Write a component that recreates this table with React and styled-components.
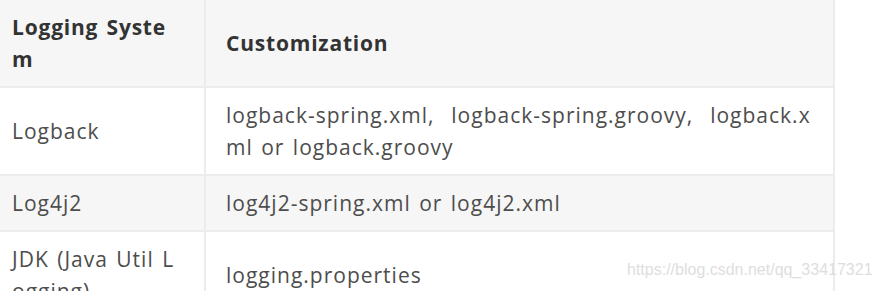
import styled, { createGlobalStyle } from "styled-components"

const GlobalStyle = createGlobalStyle`
    body {
        margin: 0;
        background: #fff;
        overflow: hidden;
    }
`

const Page = styled.div`
    position: relative;
    width: 878px;
    height: 291px;
    overflow: hidden;
`

const Table = styled.table`
    margin-left: -8px;
    width: 843px;
    table-layout: fixed;
    border-collapse: collapse;
    font-family: "Open Sans", "Noto Sans", sans-serif;
    font-size: 21px;
    line-height: 32px;
    letter-spacing: 1px;
    word-spacing: 2px;
    color: #4d4d4d;
    border-right: 2px solid #ededed;
`

const Row = styled.tr`
    background: ${({ $shaded }) => ($shaded ? "#f6f6f6" : "#fff")};
    border-bottom: 2px solid #ececec;
`

const Head = styled.th`
    text-align: left;
    font-weight: 700;
    color: #333;
    letter-spacing: 0.8px;
    padding: 11px ${({ $first }) => ($first ? "26px" : "16px")} 11px 20px;
    border-right: 2px solid #ececec;
    word-break: break-all;
    vertical-align: middle;
`

const Cell = styled.td`
    padding: 11px ${({ $first }) => ($first ? "26px" : "16px")} 11px 20px;
    border-right: 2px solid #ececec;
    word-break: break-all;
    vertical-align: middle;
`

const Watermark = styled.div`
    position: absolute;
    left: 627px;
    top: 261px;
    font-family: "Liberation Sans", Arial, sans-serif;
    font-size: 16px;
    color: #dedede;
    white-space: nowrap;
`

const rows = [
    ["Logback", "logback-spring.xml,\u00a0 logback-spring.groovy,\u00a0 logback.xml or logback.groovy"],
    ["Log4j2", "log4j2-spring.xml or log4j2.xml"],
    ["JDK (Java Util Logging)", "logging.properties"],
]

export default function App() {
    return (
        <>
            <GlobalStyle />
            <Page>
                <Table>
                    <colgroup>
                        <col style={{ width: 213 }} />
                        <col />
                    </colgroup>
                    <thead>
                        <Row $shaded>
                            <Head $first>Logging System</Head>
                            <Head>Customization</Head>
                        </Row>
                    </thead>
                    <tbody>
                        {rows.map(([sys, files], i) => (
                            <Row key={sys} $shaded={i % 2 === 1}>
                                <Cell $first>{sys}</Cell>
                                <Cell>{files}</Cell>
                            </Row>
                        ))}
                    </tbody>
                </Table>
                <Watermark>https://blog.csdn.net/qq_33417321</Watermark>
            </Page>
        </>
    )
}
